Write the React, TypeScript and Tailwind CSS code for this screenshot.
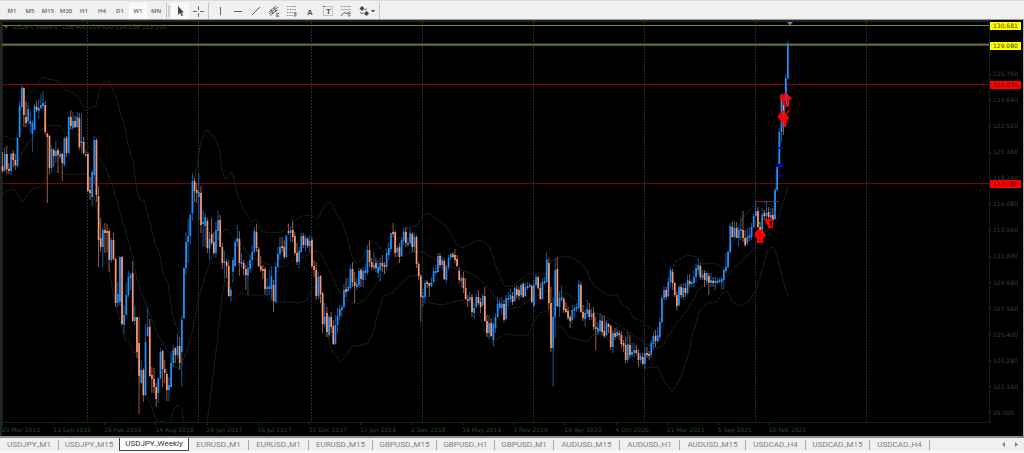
import React, { useState } from "react";
import clsx from "clsx";

const timeframes = ["M1", "M5", "M15", "M30", "H1", "H4", "D1", "W1", "MN"];

const tabs = [
  { label: "USDJPY.,M1", width: "w-[59px]" },
  { label: "USDJPY.,M15", width: "w-[60px]" },
  { label: "USDJPY.,Weekly", width: "w-[70px]" },
  { label: "EURUSD.,M1", width: "w-[60px]" },
  { label: "EURUSD.,M1", width: "w-[60px]" },
  { label: "EURUSD.,M15", width: "w-[64px]" },
  { label: "GBPUSD.,M15", width: "w-[64px]" },
  { label: "GBPUSD.,H1", width: "w-[58px]" },
  { label: "GBPUSD.,M1", width: "w-[59px]" },
  { label: "AUDUSD.,M15", width: "w-[66px]" },
  { label: "AUDUSD.,H1", width: "w-[60px]" },
  { label: "AUDUSD.,M15", width: "w-[66px]" },
  { label: "USDCAD.,H4", width: "w-[60px]" },
  { label: "USDCAD.,M15", width: "w-[64px]" },
  { label: "USDCAD.,H4", width: "w-[60px]" },
];

const dates = [
  "29 Mar 2015",
  "13 Sep 2015",
  "28 Feb 2016",
  "14 Aug 2016",
  "29 Jan 2017",
  "16 Jul 2017",
  "31 Dec 2017",
  "17 Jun 2018",
  "2 Dec 2018",
  "19 May 2019",
  "3 Nov 2019",
  "19 Apr 2020",
  "4 Oct 2020",
  "21 Mar 2021",
  "5 Sep 2021",
  "20 Feb 2022",
];

const prices = [
  "126.760",
  "124.640",
  "122.520",
  "120.360",
  "118.240",
  "116.080",
  "113.960",
  "111.840",
  "109.680",
  "107.560",
  "105.400",
  "103.280",
  "101.160",
  "99.000",
];

const tags = [
  { price: "130.681", color: "bg-[#ffff00] text-[#3c3c00]" },
  { price: "129.080", color: "bg-[#ffff00] text-[#3c3c00]" },
  { price: "125.874", color: "bg-[#ff0000] text-[#5a0000]" },
  { price: "117.780", color: "bg-[#ff0000] text-[#5a0000]" },
];

// plot space: 989 x 403 units
const PLOT_WIDTH = 989;
const PLOT_HEIGHT = 403;
const priceToY = (price: number) => 54 + (126.76 - price) * 12.25;

// high, low, open, close of each week, in plot units from the top
const candles = [
  [132, 152, 146, 151], [127, 152, 150, 134], [126, 154, 134, 149], [143, 154, 149, 151],
  [133, 155, 151, 134], [130, 147, 133, 140], [134, 150, 140, 145], [117, 147, 146, 118],
  [82, 118, 117, 86], [65, 90, 87, 68], [67, 107, 68, 95], [82, 107, 97, 103],
  [83, 104, 101, 89], [90, 113, 104, 101], [100, 132, 114, 103], [84, 111, 110, 86],
  [81, 92, 87, 90], [79, 99, 91, 88], [74, 90, 88, 85], [71, 89, 86, 83],
  [81, 115, 85, 112], [112, 183, 114, 117], [115, 154, 116, 148], [125, 152, 148, 129],
  [128, 147, 130, 136], [121, 143, 136, 131], [128, 153, 130, 135], [131, 139, 137, 134],
  [133, 161, 134, 143], [117, 147, 145, 118], [116, 137, 118, 133], [96, 134, 133, 97],
  [90, 110, 97, 106], [92, 110, 108, 101], [96, 108, 101, 107], [92, 108, 107, 97],
  [93, 130, 98, 127], [93, 133, 123, 121], [117, 135, 122, 133], [130, 137, 136, 134],
  [132, 172, 134, 171], [157, 180, 170, 173], [150, 186, 177, 152], [116, 163, 155, 120],
  [118, 182, 120, 175], [166, 247, 176, 220], [198, 232, 218, 227], [208, 247, 227, 210],
  [203, 233, 210, 213], [204, 232, 211, 213], [209, 252, 211, 240], [218, 243, 240, 220],
  [213, 240, 220, 239], [238, 287, 239, 283], [262, 287, 283, 274], [236, 286, 282, 237],
  [236, 305, 237, 304], [285, 314, 305, 295], [263, 295, 295, 275], [251, 277, 275, 257],
  [253, 270, 258, 255], [241, 302, 253, 301], [286, 305, 301, 297], [297, 338, 297, 332],
  [297, 394, 323, 356], [340, 364, 363, 350], [348, 382, 350, 375], [304, 376, 375, 322],
  [288, 317, 316, 307], [299, 357, 307, 356], [347, 373, 355, 359], [348, 373, 359, 367],
  [363, 387, 367, 379], [358, 383, 373, 358], [328, 360, 358, 332], [330, 367, 331, 349],
  [340, 363, 349, 353], [352, 381, 354, 370], [357, 381, 370, 365], [331, 368, 367, 343],
  [325, 347, 343, 330], [327, 343, 328, 335], [313, 338, 335, 326], [317, 350, 326, 343],
  [296, 367, 332, 300], [247, 299, 298, 248], [212, 255, 248, 222], [199, 243, 222, 216],
  [193, 225, 216, 195], [153, 201, 193, 161], [158, 182, 161, 171], [163, 183, 170, 173],
  [153, 200, 177, 172], [166, 213, 173, 205], [190, 227, 204, 202], [193, 227, 206, 197],
  [198, 233, 201, 228], [212, 240, 229, 219], [198, 225, 214, 223], [212, 235, 222, 233],
  [202, 238, 233, 210], [191, 220, 211, 200], [195, 227, 200, 227], [223, 249, 227, 243],
  [231, 258, 243, 241], [239, 258, 242, 246], [240, 277, 246, 276], [267, 282, 276, 270],
  [237, 263, 252, 240], [220, 247, 246, 222], [205, 227, 222, 218], [211, 256, 219, 243],
  [233, 248, 244, 242], [240, 255, 243, 249], [245, 270, 249, 255], [242, 275, 256, 248],
  [235, 253, 249, 240], [225, 248, 240, 232], [207, 234, 232, 211], [204, 232, 212, 228],
  [227, 247, 229, 246], [236, 252, 246, 250], [245, 259, 249, 251], [247, 275, 249, 269],
  [258, 276, 269, 267], [250, 275, 269, 266], [247, 280, 269, 256], [260, 292, 265, 281],
  [242, 283, 282, 247], [227, 248, 247, 234], [217, 240, 234, 227], [217, 232, 226, 228],
  [220, 239, 227, 237], [214, 238, 237, 216], [204, 215, 211, 213], [206, 222, 213, 210],
  [201, 222, 210, 217], [212, 235, 216, 233], [223, 245, 233, 242], [227, 248, 242, 231],
  [213, 233, 232, 216], [213, 228, 216, 225], [214, 232, 225, 218], [217, 228, 219, 226],
  [215, 233, 226, 221], [217, 248, 220, 246], [240, 257, 246, 250], [242, 280, 250, 276],
  [252, 279, 276, 257], [255, 283, 256, 274], [272, 313, 273, 304], [283, 307, 304, 297],
  [287, 317, 293, 312], [295, 317, 315, 297], [292, 313, 297, 307], [300, 325, 306, 324],
  [295, 325, 324, 305], [288, 313, 305, 296], [285, 300, 296, 289], [285, 297, 290, 287],
  [264, 288, 287, 270], [258, 277, 269, 272], [258, 272, 271, 267], [245, 270, 268, 249],
  [242, 267, 249, 262], [252, 283, 262, 266], [257, 270, 267, 264], [248, 268, 265, 251],
  [248, 267, 250, 259], [247, 267, 260, 251], [244, 260, 253, 250], [225, 255, 253, 230],
  [220, 247, 230, 242], [238, 250, 242, 247], [232, 250, 248, 245], [238, 252, 243, 248],
  [240, 258, 253, 247], [238, 262, 250, 243], [235, 252, 243, 246], [242, 254, 245, 247],
  [229, 250, 247, 233], [222, 240, 235, 228], [213, 232, 229, 213], [203, 217, 212, 214],
  [210, 237, 212, 233], [225, 237, 232, 228], [223, 243, 227, 237], [217, 237, 236, 220],
  [208, 225, 221, 212], [207, 227, 212, 223], [217, 227, 225, 223], [208, 225, 223, 213],
  [212, 232, 214, 227], [213, 232, 227, 217], [215, 248, 217, 244], [242, 260, 244, 256],
  [254, 302, 256, 277], [272, 287, 278, 276], [260, 283, 277, 263], [260, 268, 262, 264],
  [263, 277, 263, 266], [257, 267, 266, 262], [247, 263, 262, 251], [245, 255, 253, 251],
  [233, 253, 252, 236], [233, 248, 236, 245], [236, 250, 245, 240], [238, 260, 241, 259],
  [245, 263, 260, 247], [235, 250, 247, 238], [233, 240, 238, 234], [232, 238, 234, 237],
  [229, 243, 235, 240], [235, 247, 239, 246], [247, 263, 251, 260], [255, 267, 261, 258],
  [252, 273, 258, 268], [258, 280, 268, 279], [275, 287, 279, 281], [272, 283, 280, 277],
  [274, 297, 277, 292], [283, 299, 293, 288], [274, 288, 287, 277], [270, 285, 277, 283],
  [278, 293, 282, 287], [273, 287, 285, 276], [267, 302, 276, 301], [295, 317, 301, 313],
  [295, 319, 313, 303], [298, 317, 303, 316], [302, 327, 320, 304], [293, 313, 308, 297],
  [277, 298, 297, 284], [278, 290, 288, 283], [277, 295, 288, 284], [280, 302, 284, 300],
  [275, 300, 299, 278], [272, 287, 280, 278], [268, 282, 279, 275], [272, 285, 276, 282],
  [266, 282, 281, 268], [265, 278, 269, 275], [267, 280, 270, 276], [263, 278, 275, 265],
  [262, 278, 264, 277], [263, 277, 276, 267], [262, 270, 268, 266], [263, 268, 267, 265],
  [264, 283, 266, 282], [260, 287, 286, 265], [255, 267, 265, 257], [256, 270, 257, 268],
  [263, 280, 268, 279], [258, 280, 279, 262], [257, 265, 263, 261], [232, 263, 262, 240],
  [238, 290, 243, 283], [267, 332, 283, 328], [277, 367, 328, 297], [239, 318, 297, 250],
  [237, 287, 249, 286], [272, 297, 287, 278], [266, 282, 280, 277], [277, 293, 279, 290],
  [282, 293, 289, 292], [287, 300, 291, 298], [295, 308, 297, 301], [285, 303, 300, 290],
  [285, 298, 291, 288], [283, 292, 289, 287], [260, 291, 288, 264], [262, 293, 265, 292],
  [285, 301, 292, 298], [290, 307, 299, 293], [280, 298, 294, 289], [283, 300, 290, 297],
  [288, 300, 297, 294], [287, 310, 293, 307], [297, 330, 307, 309], [302, 315, 312, 308],
  [293, 313, 311, 300], [295, 315, 301, 312], [296, 318, 311, 316], [300, 317, 315, 303],
  [303, 313, 304, 307], [305, 330, 306, 327], [310, 333, 327, 313], [308, 320, 313, 317],
  [307, 318, 316, 312], [310, 320, 313, 315], [311, 328, 315, 324], [320, 332, 323, 326],
  [317, 343, 325, 340], [312, 343, 340, 324], [315, 338, 325, 335], [323, 337, 335, 332],
  [323, 337, 333, 330], [325, 335, 330, 333], [329, 347, 333, 340], [333, 343, 340, 336],
  [333, 345, 337, 344], [327, 349, 344, 333], [327, 338, 333, 335], [331, 340, 334, 336],
  [320, 338, 335, 323], [312, 330, 324, 316], [310, 327, 316, 321], [307, 323, 321, 315],
  [297, 321, 317, 302], [275, 303, 302, 278], [266, 280, 278, 270], [267, 280, 270, 277],
  [257, 278, 276, 262], [247, 267, 262, 250], [249, 270, 252, 263], [262, 277, 263, 275],
  [272, 290, 275, 286], [265, 287, 285, 267], [264, 278, 267, 275], [263, 280, 277, 268],
  [263, 277, 268, 273], [255, 275, 273, 260], [254, 267, 261, 264], [259, 267, 264, 262],
  [250, 267, 263, 257], [244, 263, 257, 248], [238, 255, 250, 245], [243, 260, 246, 257],
  [250, 260, 258, 255], [250, 267, 253, 260], [251, 265, 261, 253], [253, 275, 256, 263],
  [253, 267, 263, 260], [257, 267, 261, 263], [257, 270, 263, 261], [258, 264, 263, 261],
  [258, 263, 262, 260], [257, 270, 262, 259], [248, 269, 260, 250], [233, 253, 251, 247],
  [230, 249, 247, 232], [203, 233, 232, 206], [201, 218, 207, 217], [202, 218, 217, 208],
  [202, 218, 208, 218], [207, 226, 218, 210], [197, 220, 211, 209], [191, 222, 210, 218],
  [210, 227, 218, 225], [208, 225, 223, 217], [207, 221, 218, 215], [203, 220, 217, 207],
  [194, 208, 207, 196], [181, 197, 196, 191], [187, 208, 191, 207], [202, 217, 207, 215],
  [188, 217, 215, 195], [190, 200, 193, 196], [182, 200, 196, 193], [187, 200, 192, 197],
  [188, 207, 198, 195], [188, 202, 195, 200], [168, 200, 199, 170], [146, 171, 170, 147],
  [108, 147, 147, 112], [73, 122, 112, 75], [78, 115, 80, 100], [54, 87, 85, 58],
  [21, 60, 58, 24],
];

const upperBand =
  "2,117 7,116 10,119 16,119 19,108 24,86 28,76 36,67 42,57 48,59 54,60 60,62 65,70 74,73 80,80 85,91 90,88 96,86 100,68 104,62 109,61 113,70 117,78 120,93 124,104 128,125 133,141 137,170 140,180 144,180 150,203 155,223 160,235 163,253 168,263 172,293 175,303 179,313 182,305 184,270 188,220 192,180 195,157 200,127 205,111 209,111 217,122 220,133 222,150 225,159 228,158 231,152 233,155 238,176 245,192 252,202 256,199 261,211 270,213 283,212 292,198 295,201 302,196 310,195 318,199 322,190 327,182 332,184 337,195 342,202 347,217 352,237 356,243 362,240 368,225 373,221 378,225 383,232 390,225 400,217 407,208 417,205 423,195 430,193 435,198 443,203 450,213 457,225 463,228 470,224 477,220 483,221 490,227 495,243 500,257 505,267 513,266 520,260 530,253 537,255 547,253 550,242 558,237 570,237 580,242 587,250 590,260 597,268 607,275 617,275 622,285 628,288 633,297 643,302 650,308 657,312 661,308 663,287 670,257 675,242 687,235 697,237 703,244 713,243 722,247 727,246 730,230 740,202 748,192 757,181 767,183 773,187 776,160 780,127 785,90 789,55";
const middleBand =
  "2,152 10,148 17,145 22,133 30,120 38,112 45,107 52,105 60,106 65,113 78,115 84,120 88,127 95,130 100,140 107,151 112,165 117,181 125,210 133,237 137,260 147,287 157,313 167,330 175,347 180,349 187,330 193,310 198,280 205,257 213,233 222,212 227,209 233,217 240,223 250,236 262,242 273,247 285,246 293,240 303,237 312,232 318,231 323,237 332,257 340,272 347,280 357,284 365,280 372,270 383,255 393,247 403,237 410,232 423,232 433,238 443,245 457,249 467,252 477,257 487,266 497,280 503,288 510,289 520,287 532,278 543,272 553,269 567,274 580,283 590,292 603,295 617,304 633,315 647,325 658,328 663,325 673,308 687,290 700,268 707,262 720,260 727,256 737,245 748,235 756,225 763,213 772,207 778,198 783,183 788,166";
const lowerBand =
  "2,175 8,170 14,169 18,175 22,183 27,175 33,169 40,167 47,157 53,151 60,152 66,155 85,154 90,158 97,190 105,233 110,252 113,273 117,290 122,307 125,320 130,322 133,332 137,333 140,367 147,377 152,387 155,397 158,403 163,400 165,403 171,402 173,390 178,385 182,388 184,403";
const lowerBandRest =
  "207,403 212,363 217,323 222,277 225,258 228,273 232,279 240,273 248,275 263,275 272,282 287,282 300,283 307,280 312,268 317,265 322,290 328,317 333,333 341,341 347,335 352,326 362,325 368,323 373,313 378,293 383,277 393,272 402,262 410,256 419,255 425,275 430,283 443,285 453,282 463,280 470,287 480,295 485,312 493,323 500,317 508,314 515,315 528,315 533,303 540,293 548,290 552,305 562,308 570,317 580,320 588,322 592,315 600,313 610,322 620,330 633,340 645,348 657,347 660,352 665,363 672,371 678,363 687,340 693,313 700,290 707,283 717,282 723,272 728,272 732,282 742,286 750,280 757,268 763,247 768,230 772,227 775,230 780,247 783,260 788,277";

const gridLines = [87, 198, 311, 422, 533, 644, 755, 866];

const Candle = ({ index, data }: { index: number; data: number[] }) => {
  const [high, low, open, close] = data;
  const x = 2.5 + index * 2.134;
  const color = close < open ? "#1e90ff" : "#fa9870";
  return (
    <g>
      <path d={`M${x} ${high}V${low}`} stroke={color} strokeWidth={1} opacity={0.6} />
      <rect
        x={x - 0.8}
        y={Math.min(open, close)}
        width={1.7}
        height={Math.max(Math.abs(open - close), 1)}
        fill={color}
      />
    </g>
  );
};

const Plot = () => (
  <svg
    viewBox={`0 0 ${PLOT_WIDTH} ${PLOT_HEIGHT}`}
    preserveAspectRatio="none"
    className="absolute inset-0 h-full w-full"
    aria-hidden="true"
  >
    <rect width="989" height="2" fill="#1c2527" />
    <rect width="2" height="403" fill="#1d2525" />
    <rect x="2" y="2" width="1" height="401" fill="#14201f" />
    {gridLines.map((x) => (
      <path key={x} d={`M${x + 0.5} 2V403`} stroke="#1d2e2e" strokeDasharray="2 1" />
    ))}
    <g fill="none" stroke="#14211e">
      <polyline points={upperBand} />
      <polyline points={middleBand} />
      <polyline points={lowerBand} />
      <polyline points={lowerBandRest} />
    </g>
    <rect x="2" y="5" width="987" height="1" fill="#85850a" />
    <rect x="2" y="23" width="987" height="1" fill="#2c363c" />
    <rect x="2" y="24" width="987" height="1" fill="#66682c" />
    <rect x="2" y="25" width="987" height="1" fill="#5c5c0c" />
    <rect x="2" y="64" width="987" height="1" fill="#960000" />
    <rect x="2" y="163" width="987" height="1" fill="#820000" />
    {candles.map((data, index) => (
      <Candle key={index} index={index} data={data} />
    ))}
    {/* trade marks */}
    <path d="M756 181.500H779" stroke="#8c1c1c" />
    <g fill="#0000dc">
      <rect x="778" y="127" width="5" height="1.500" />
      <rect x="777" y="144" width="6" height="3" />
      <rect x="779" y="155" width="4" height="1.500" />
    </g>
    <rect x="758" y="202" width="2" height="1.500" fill="#a0a000" />
    <g fill="#ff0000">
      <path d="M785.700 72L791.500 78V80H789V87H787L783 85V80H780V77Z" />
      <path d="M777.500 97L782 90L785 94L789.500 89L790 90L786.500 95L789.500 98L787 100L786 107H782L781 101Z" />
      <path d="M755 213L758 209L762 210L766 215L763 219V223H757V219L754.500 216Z" />
      <path d="M765 199H773V208H768V206L765 202Z" />
    </g>
    <rect x="770" y="201" width="2" height="5" fill="#300" />
    <path d="M759 216L760.500 214L762 216M758.500 220H761.500M785.500 81V86" stroke="#800000" fill="none" />
    <path d="M786.500 62V85M783.500 90V95M783.500 101V108" stroke="#1e6ee6" />
    <path d="M775 193H777" stroke="#a00000" />
    <path d="M787 2H793L790 5.500Z" fill="#708090" />
    <rect x="0" y="402" width="989" height="1" fill="#14201f" />
  </svg>
);

const Chart = () => (
  <main className="flex min-h-96 flex-1 border-b-2 border-[#8c8c8c] bg-black font-['DejaVu_Sans',sans-serif] text-[6px] leading-2 text-[#294343]">
    <div className="flex flex-1 flex-col">
      <div className="relative flex-1">
        <Plot />
        <h1 className="relative flex items-center gap-1 pt-[3px] pl-1 whitespace-pre">
          <svg viewBox="0 0 4 3" className="h-[3px] w-1" fill="#35504f">
            <path d="M0 0H4L2 3Z" />
          </svg>
          {"USDJPY.,Weekly  126.400 129.410 126.236 129.193"}
        </h1>
      </div>
      <div className="flex h-[13px] border-l-2 border-[#1d2525]">
        {dates.map((date) => (
          <div key={date} className="w-[5.18%] whitespace-nowrap">
            <div className="mb-px h-[2px] w-px bg-[#1d2e2e]" />
            {date}
          </div>
        ))}
      </div>
    </div>
    <div className="mb-[13px] w-[34px] border-l border-[#14201f]">
      <div className="relative flex h-full flex-col justify-between pt-[50px] pb-1.5">
        {prices.map((price) => (
          <div key={price} className="flex items-center gap-[2px]">
            <span className="h-px w-px bg-[#294343]" />
            {price}
          </div>
        ))}
        {tags.map((tag) => (
          <div
            key={tag.price}
            className={clsx(
              "absolute left-0 h-2 w-[31px] -translate-y-1/2 pl-[3px]",
              tag.color
            )}
            style={{
              top: `${(priceToY(Number(tag.price)) / PLOT_HEIGHT) * 100}%`,
            }}
          >
            {tag.price}
          </div>
        ))}
      </div>
    </div>
    <div className="w-px bg-[#b4b4b4]" />
  </main>
);

type ToolProps = {
  label: string;
  active?: boolean;
  wide?: boolean;
  children: React.ReactNode;
};

const Tool = ({ label, active, wide, children }: ToolProps) => (
  <button
    type="button"
    aria-label={label}
    className={clsx(
      "flex h-4 items-center justify-center",
      wide ? "w-6" : "w-[18px]",
      active && "bg-[#fafafa]"
    )}
  >
    <svg
      viewBox={wide ? "0 0 18 12" : "0 0 12 12"}
      className={clsx(
        "h-3 font-['Liberation_Sans',sans-serif] font-bold",
        wide ? "w-[18px]" : "w-3"
      )}
      fill="none"
      stroke="#666"
    >
      {children}
    </svg>
  </button>
);

// letter that is part of a tool icon
const Letter = ({ x, y, size, children }: { x: number; y: number; size: number; children: string }) => (
  <text x={x} y={y} fontSize={size} fill="#555" stroke="none">
    {children}
  </text>
);

const Divider = ({ className }: { className?: string }) => (
  <span className={clsx("h-4 w-px bg-[#c4c4c4]", className)} />
);

const Toolbar = () => {
  const [timeframe, setTimeframe] = useState("W1");
  return (
    <header className="flex h-5 items-center border-t border-b border-t-[#dcdcdc] border-b-[#9a9a9a] pt-px pl-[3px]">
      {timeframes.map((item) => (
        <button
          key={item}
          type="button"
          onClick={() => setTimeframe(item)}
          className={clsx(
            "h-4 w-[18px] text-center font-['Noto_Sans',sans-serif] text-[6px] leading-4 font-medium text-[#555]",
            timeframe === item && "bg-[#fafafa]"
          )}
        >
          {item}
        </button>
      ))}
      <Divider className="mx-px" />
      <span className="mr-px h-3 w-[2px] bg-[#cfcfcf]" />
      <Tool label="Cursor" active>
        <path d="M4 1V10L6 8L7.500 11L9 10.500L7.500 7.500H10Z" fill="#444" stroke="none" />
      </Tool>
      <Tool label="Crosshair">
        <path d="M6.500 1V5M6.500 8V12M1 6.500H5M8 6.500H12" />
      </Tool>
      <Divider className="mr-0.5 ml-px" />
      <Tool label="Vertical line">
        <path d="M6.500 2V10" />
      </Tool>
      <Tool label="Horizontal line">
        <path d="M2 6.500H10" />
      </Tool>
      <Tool label="Trendline">
        <path d="M2 10L10 2" />
      </Tool>
      <Tool label="Equidistant channel">
        <path d="M1 7L8 1M1 9L10 2M2 10.500L10 4.500M3 4L5 9M6 2L8 7" />
        <Letter x={8} y={12} size={5}>E</Letter>
      </Tool>
      <Tool label="Fibonacci retracement">
        <path d="M1 1.500H10M1 4.500H10M1 7.500H10M1 10.500H7" strokeDasharray="1 0.600" stroke="#888" />
        <Letter x={8} y={12} size={5}>F</Letter>
      </Tool>
      <Tool label="Text">
        <Letter x={3} y={10} size={8}>A</Letter>
      </Tool>
      <Tool label="Text label">
        <rect x="1.500" y="1.500" width="9" height="9" stroke="#999" strokeDasharray="1 1" />
        <path d="M1 1.500H3" />
        <Letter x={4} y={9} size={8}>T</Letter>
      </Tool>
      <Tool label="Fibonacci fan">
        <path d="M1 1.500H11M1 4.500H11" strokeDasharray="1 0.600" stroke="#888" />
        <path d="M1 11L4 7.500L7 8.500L10 6.500" />
        <Letter x={8} y={12} size={5}>F</Letter>
      </Tool>
      <Tool label="Shapes" wide>
        <g fill="#444" stroke="none">
          <path d="M4 1L6.500 3.500L4 6L1.500 3.500Z" />
          <path d="M8.500 6L11 8.500L8.500 11L6 8.500Z" />
          <path d="M13 5H17L15 7.500Z" />
        </g>
        <path d="M2.500 7L4 9L5.500 7.500M6.500 5L9 4" />
      </Tool>
      <Divider />
    </header>
  );
};

const ChartTabs = () => {
  const [active, setActive] = useState(2);
  return (
    <footer className="flex h-[15px] items-start justify-between border-b-2 border-[#fafafa]">
      <nav className="flex">
        {tabs.map((tab, index) => (
          <button
            key={index}
            type="button"
            onClick={() => setActive(index)}
            className={clsx(
              "flex h-[13px] items-center justify-center font-['Roboto',sans-serif] text-[8px] leading-3 whitespace-nowrap",
              tab.width,
              active === index
                ? "border border-t-0 border-[#444] bg-white text-[#333]"
                : "text-[#808080]"
            )}
          >
            <span className="flex-1">{tab.label}</span>
            {active !== index && active !== index + 1 && (
              <span className="h-2.5 w-px bg-[#a8a8a8]" />
            )}
          </button>
        ))}
      </nav>
      <div className="flex gap-2 pt-1 pr-1.5">
        <button type="button" aria-label="Scroll tabs left">
          <svg viewBox="0 0 4 5" className="h-[5px] w-1" fill="#808080">
            <path d="M3 0V5L0 2.500Z" />
          </svg>
        </button>
        <button type="button" aria-label="Scroll tabs right">
          <svg viewBox="0 0 4 5" className="h-[5px] w-1" fill="#808080">
            <path d="M1 0V5L4 2.500Z" />
          </svg>
        </button>
      </div>
    </footer>
  );
};

const App = () => (
  <div className="flex min-h-screen flex-col bg-[#f0f0f0]">
    <Toolbar />
    <Chart />
    <ChartTabs />
  </div>
);

export default App;
